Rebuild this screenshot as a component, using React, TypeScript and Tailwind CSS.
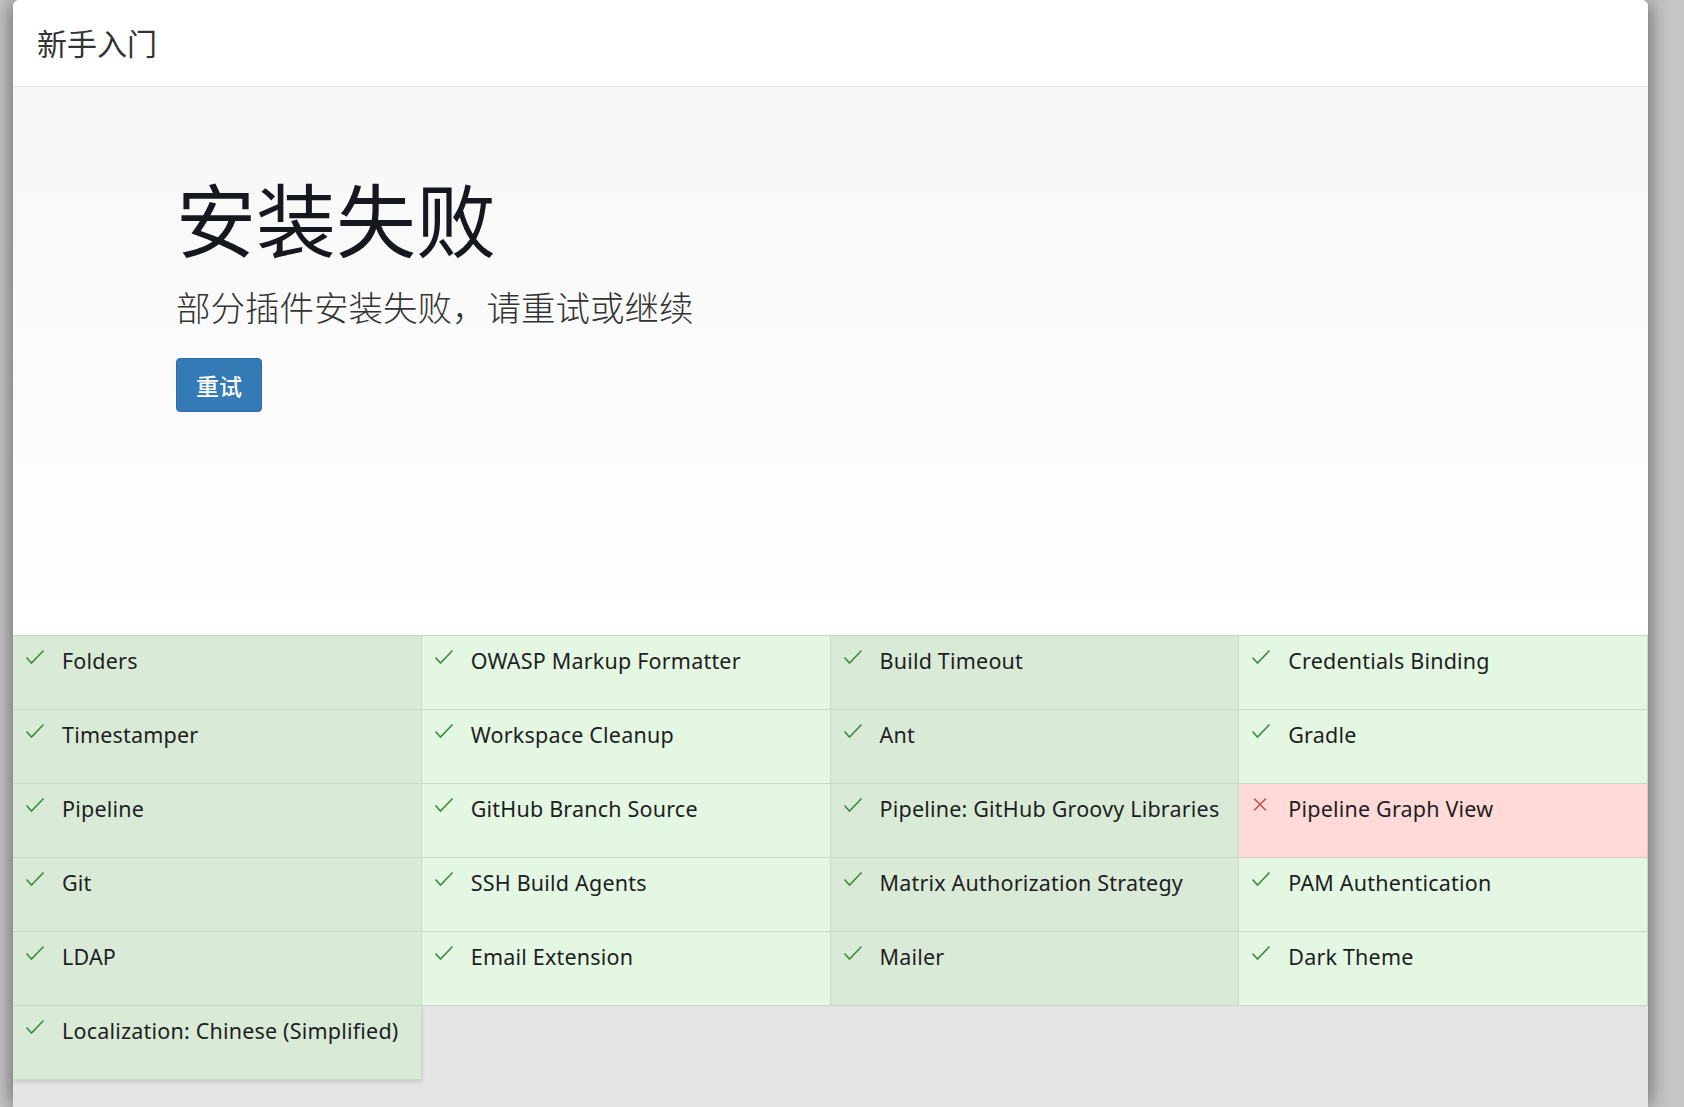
import React from 'react';

type Plugin = { name: string; failed?: boolean };

const plugins: Plugin[] = [
  { name: 'Folders' },
  { name: 'OWASP Markup Formatter' },
  { name: 'Build Timeout' },
  { name: 'Credentials Binding' },
  { name: 'Timestamper' },
  { name: 'Workspace Cleanup' },
  { name: 'Ant' },
  { name: 'Gradle' },
  { name: 'Pipeline' },
  { name: 'GitHub Branch Source' },
  { name: 'Pipeline: GitHub Groovy Libraries' },
  { name: 'Pipeline Graph View', failed: true },
  { name: 'Git' },
  { name: 'SSH Build Agents' },
  { name: 'Matrix Authorization Strategy' },
  { name: 'PAM Authentication' },
  { name: 'LDAP' },
  { name: 'Email Extension' },
  { name: 'Mailer' },
  { name: 'Dark Theme' },
  { name: 'Localization: Chinese (Simplified)' },
];

const CheckIcon = () => (
  <svg width="20" height="16" viewBox="0 0 20 16" className="shrink-0">
    <polyline points="1.5,8.5 6.5,14 18.5,1.5" fill="none" stroke="#3d8b3d" strokeWidth="1.6" />
  </svg>
);

const CrossIcon = () => (
  <svg width="20" height="16" viewBox="0 0 20 16" className="shrink-0">
    <path d="M3 1.5 L15 13.5 M15 1.5 L3 13.5" fill="none" stroke="#c9504c" strokeWidth="1.6" />
  </svg>
);

const PluginCell: React.FC<{ plugin: Plugin; index: number; last: boolean }> = ({ plugin, index, last }) => {
  const col = index % 4;
  let bg = col % 2 === 0 ? 'bg-[#d9ebd7]' : 'bg-[#e4f7e2]';
  let border = 'border-[#c6dac4]';
  if (plugin.failed) {
    bg = 'bg-[#ffdad9]';
    border = 'border-[#e3c4c3]';
  }
  return (
    <div
      className={`h-[74px] border-b border-r ${border} ${bg} flex items-start pl-[12px] pt-[12px] ${
        last ? 'shadow-[0_2px_4px_rgba(0,0,0,0.12)]' : ''
      }`}
    >
      <div className="w-[37px] pt-px">{plugin.failed ? <CrossIcon /> : <CheckIcon />}</div>
      <span className="pt-px text-[21.5px] leading-[24px] text-[#1e1e24] tracking-[0.2px] whitespace-nowrap">
        {plugin.name}
      </span>
    </div>
  );
};

export default function App() {
  return (
    <div
      className="h-[1107px] w-[1684px] overflow-hidden bg-[#c6c6c6] flex"
      style={{ fontFamily: '"Noto Sans", "Noto Sans CJK SC", sans-serif' }}
    >
      <div className="ml-[13px] w-[1635px] flex flex-col bg-[#e4e4e4] rounded-t-[6px] shadow-[0_0_22px_rgba(0,0,0,0.55)] overflow-hidden">
        {/* header */}
        <div className="h-[87px] shrink-0 bg-white border-b border-[#e5e5e5] flex items-center pl-[24px]">
          <h4
            className="text-[30px] text-[#333] font-normal leading-none pb-[2px]"
            style={{ fontFamily: '"Noto Sans CJK SC", sans-serif' }}
          >
            新手入门
          </h4>
        </div>

        {/* body */}
        <div
          className="h-[548px] shrink-0 bg-gradient-to-b from-[#f7f7f7] to-white pl-[163px] pt-[89px]"
          style={{ fontFamily: '"Noto Sans CJK SC", sans-serif' }}
        >
          <h1 className="text-[80px] leading-[80px] text-[#17171f] font-normal">安装失败</h1>
          <p className="text-[34.5px] leading-[40px] text-[#333] font-light mt-[30px]">
            部分插件安装失败，请重试或继续
          </p>
          <button className="mt-[32px] w-[86px] h-[54px] rounded-[4px] bg-[#337ab7] border border-[#2e6da4] text-white text-[23px] font-medium flex items-center justify-center">
            重试
          </button>
        </div>

        {/* plugin list */}
        <div className="border-t border-[#cfcfcf] grid grid-cols-4">
          {plugins.map((p, i) => (
            <PluginCell key={p.name} plugin={p} index={i} last={i === plugins.length - 1} />
          ))}
        </div>
      </div>
    </div>
  );
}
